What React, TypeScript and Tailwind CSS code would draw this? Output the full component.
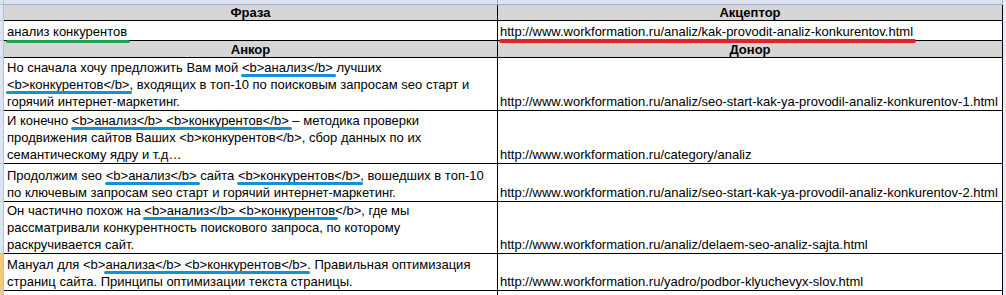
import React from "react";

const Mark = ({
  color,
  pos = "-bottom-[2px]",
  children,
}: {
  color: string;
  pos?: string;
  children: React.ReactNode;
}) => (
  <span className="relative">
    {children}
    <span className={`absolute left-[-1px] right-[-3px] rounded-full ${pos} ${color}`} />
  </span>
);

const BLUE = "bg-[#1590d8] h-[3px]";

interface RowProps {
  h: string;
  left: React.ReactNode;
  right: React.ReactNode;
  header?: boolean;
  strip?: string;
}

const Row = ({ h, left, right, header = false, strip = "bg-[#dce5f1]" }: RowProps) => {
  const cell = header
    ? "bg-[#d6d6d6] justify-center items-center font-bold"
    : "bg-white items-end px-[3px]";
  return (
    <div className={`flex ${h}`}>
      <div className={`w-[4px] shrink-0 border-r border-b border-[#b3c3d7] ${strip}`} />
      <div className={`w-[494px] shrink-0 flex border-r border-b border-black ${cell}`}>
        <div className="whitespace-nowrap">{left}</div>
      </div>
      <div className={`w-[505px] shrink-0 flex border-r border-b border-black ${cell} ${header ? "" : "pl-[2px]"}`}>
        <div className="whitespace-nowrap">{right}</div>
      </div>
      <div className="flex-1 bg-[#e8edf4]" />
    </div>
  );
};

const Lines = ({ lines }: { lines: React.ReactNode[] }) => (
  <div>
    {lines.map((l, i) => (
      <div key={i}>{l}</div>
    ))}
  </div>
);

export default function App() {
  return (
    <div className="w-[1006px] h-[295px] overflow-hidden bg-white text-black text-[13px] leading-[17px] font-['Liberation_Sans',Arial,sans-serif]">
      {/* partial row above */}
      <div className="flex h-[5px] bg-[#dfe4ea]">
        <div className="w-[4px] shrink-0 border-r border-b border-[#b3c3d7] bg-[#dce5f1]" />
        <div className="w-[494px] shrink-0 border-r border-b border-[#9db1ca]" />
        <div className="w-[505px] shrink-0 border-r border-b border-[#9db1ca]" />
        <div className="flex-1 bg-[#e8edf4]" />
      </div>

      <Row h="h-[16px]" header left="Фраза" right="Акцептор" />
      <Row
        h="h-[20px]"
        left={<Mark color="bg-[#22a24a] h-[3px]" pos="-bottom-[4px]">анализ конкурентов</Mark>}
        right={
          <Mark color="bg-[#e3202b] h-[4px]" pos="-bottom-[4px]">
            http://www.workformation.ru/analiz/kak-provodit-analiz-konkurentov.html
          </Mark>
        }
      />
      <Row h="h-[17px]" header left="Анкор" right="Донор" />

      <Row
        h="h-[53px]"
        left={
          <Lines
            lines={[
              <>
                Но сначала хочу предложить Вам мой <Mark color={BLUE}>{"<b>анализ</b>"}</Mark> лучших
              </>,
              <>
                <Mark color={BLUE}>{"<b>конкурентов</b>"}</Mark>, входящих в топ-10 по поисковым запросам seo старт и
              </>,
              <>горячий интернет-маркетинг.</>,
            ]}
          />
        }
        right="http://www.workformation.ru/analiz/seo-start-kak-ya-provodil-analiz-konkurentov-1.html"
      />
      <Row
        h="h-[53px]"
        left={
          <Lines
            lines={[
              <>
                И конечно <Mark color={BLUE}>{"<b>анализ</b> <b>конкурентов</b>"}</Mark> – методика проверки
              </>,
              <>{"продвижения сайтов Ваших <b>конкурентов</b>, сбор данных по их"}</>,
              <>семантическому ядру и т.д…</>,
            ]}
          />
        }
        right="http://www.workformation.ru/category/analiz"
      />
      <Row
        h="h-[38px]"
        left={
          <Lines
            lines={[
              <>
                Продолжим seo <Mark color={BLUE}>{"<b>анализ</b>"}</Mark> сайта{" "}
                <Mark color={BLUE}>{"<b>конкурентов</b>"}</Mark>, вошедших в топ-10
              </>,
              <>по ключевым запросам seo старт и горячий интернет-маркетинг.</>,
            ]}
          />
        }
        right="http://www.workformation.ru/analiz/seo-start-kak-ya-provodil-analiz-konkurentov-2.html"
      />
      <Row
        h="h-[52px]"
        left={
          <Lines
            lines={[
              <>
                Он частично похож на <Mark color={BLUE}>{"<b>анализ</b> <b>конкурентов"}</Mark>
                {"</b>, где мы"}
              </>,
              <>рассматривали конкурентность поискового запроса, по которому</>,
              <>раскручивается сайт.</>,
            ]}
          />
        }
        right="http://www.workformation.ru/analiz/delaem-seo-analiz-sajta.html"
      />
      <Row
        h="h-[37px]"
        strip="bg-[#f5c878]"
        left={
          <Lines
            lines={[
              <>
                {"Мануал для <b>"}
                <Mark color={BLUE}>{"анализа</b> <b>конкурентов</b>"}</Mark>. Правильная оптимизация
              </>,
              <>страниц сайта. Принципы оптимизации текста страницы.</>,
            ]}
          />
        }
        right="http://www.workformation.ru/yadro/podbor-klyuchevyx-slov.html"
      />

      {/* partial row below */}
      <div className="flex h-[4px]">
        <div className="w-[4px] shrink-0 border-r border-[#b3c3d7] bg-[#f5c878]" />
        <div className="w-[494px] shrink-0 border-r border-black" />
        <div className="w-[505px] shrink-0 border-r border-black" />
        <div className="flex-1 bg-[#e8edf4]" />
      </div>
    </div>
  );
}
